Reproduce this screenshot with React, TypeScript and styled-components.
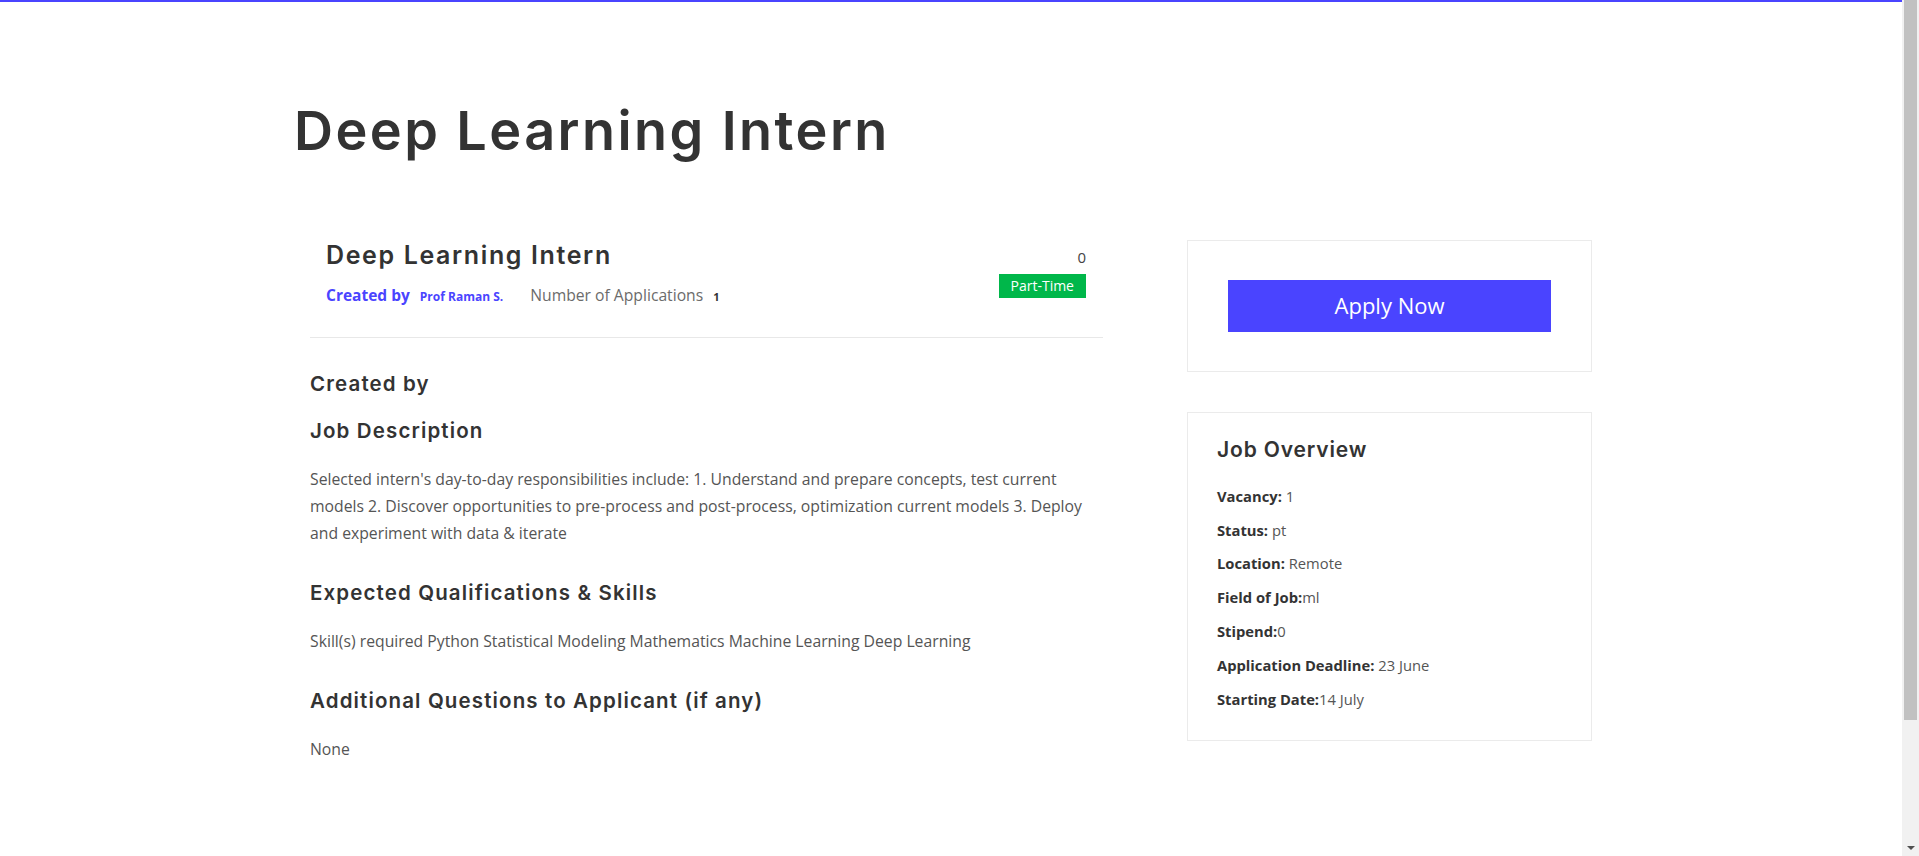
import React from "react";
import styled, { createGlobalStyle } from "styled-components";

const BLUE = "#4a44ff";
const HEAD_FONT = `"Inter", "Noto Sans", sans-serif`;
const BODY_FONT = `"Open Sans", "Noto Sans", sans-serif`;

const GlobalStyle = createGlobalStyle`
  html, body { margin: 0; padding: 0; background: #ffffff; }
  body { font-family: ${BODY_FONT}; color: #555555; }
  *, *::before, *::after { box-sizing: border-box; }
`;

const Page = styled.div`
  min-height: 1000px;
  padding-right: 17px;
`;

const TopBar = styled.div`
  height: 2px;
  background: ${BLUE};
`;

const ScrollTrack = styled.div`
  position: fixed;
  top: 0;
  right: 0;
  bottom: 0;
  width: 17px;
  background: #f1f1f1;
  display: flex;
  flex-direction: column;
  justify-content: space-between;
  align-items: center;
`;

const ScrollThumb = styled.div`
  width: 13px;
  height: 720px;
  background: #c1c1c1;
`;

const ScrollArrow = styled.div`
  width: 0;
  height: 0;
  margin-bottom: 6px;
  border-left: 4px solid transparent;
  border-right: 4px solid transparent;
  border-top: 4px solid #505050;
`;

const Container = styled.main`
  width: 1314px;
  margin: 0 auto;
`;

const PageTitle = styled.h1`
  margin: 97px 0 0;
  font-family: ${HEAD_FONT};
  font-size: 54px;
  font-weight: 600;
  line-height: 1.2;
  letter-spacing: 0.045em;
  color: #333333;
`;

const Columns = styled.div`
  margin-top: 76px;
  padding: 0 16px;
  display: grid;
  grid-template-columns: 793px 405px;
  column-gap: 84px;
  align-items: start;
`;

const MainColumn = styled.section``;

const CardHeader = styled.header`
  display: flex;
  justify-content: space-between;
  align-items: flex-start;
  padding: 1px 17px 28px 16px;
  border-bottom: 1px solid #e8e8e8;
`;

const HeaderInfo = styled.div``;

const HeaderTitle = styled.h2`
  margin: 0;
  font-family: ${HEAD_FONT};
  font-size: 25px;
  font-weight: 600;
  line-height: 1.16;
  letter-spacing: 0.065em;
  color: #333333;
`;

const MetaRow = styled.div`
  margin-top: 13px;
  display: flex;
  align-items: baseline;
  line-height: 24px;
`;

const CreatedLabel = styled.span`
  font-size: 15.5px;
  font-weight: 700;
  color: ${BLUE};
`;

const Author = styled.span`
  margin-left: 10px;
  font-size: 12px;
  font-weight: 700;
  color: ${BLUE};
`;

const AppsLabel = styled.span`
  margin-left: 27px;
  font-size: 15.7px;
  color: #6b6b6b;
`;

const AppsCount = styled.span`
  margin-left: 10px;
  font-size: 11px;
  font-weight: 700;
  color: #333333;
`;

const HeaderSide = styled.div`
  display: flex;
  flex-direction: column;
  align-items: flex-end;
  padding-top: 5px;
`;

const Count = styled.span`
  font-size: 15px;
  line-height: 22.5px;
  color: #444444;
  margin-bottom: 6px;
`;

const Badge = styled.span`
  display: inline-block;
  background: #00b74a;
  color: #ffffff;
  font-size: 14px;
  line-height: 24px;
  padding: 0 12px;
`;

const Details = styled.div`
  padding-top: 34px;
`;

const SectionTitle = styled.h3`
  margin: 0 0 23px;
  font-family: ${HEAD_FONT};
  font-size: 20.5px;
  font-weight: 600;
  line-height: 24px;
  letter-spacing: 0.055em;
  color: #333333;
`;

const Text = styled.p`
  margin: 0 0 34px;
  font-size: 15.75px;
  line-height: 27px;
  color: #555555;
`;

const SideColumn = styled.aside`
  display: flex;
  flex-direction: column;
  gap: 40px;
`;

const Card = styled.div<{ $pad: string }>`
  border: 1px solid #ebebeb;
  padding: ${(p) => p.$pad};
`;

const ApplyButton = styled.button`
  display: block;
  width: 100%;
  height: 52px;
  border: 0;
  background: ${BLUE};
  color: #ffffff;
  font-family: ${BODY_FONT};
  font-size: 22px;
  font-weight: 400;
  line-height: 48px;
  padding: 0 0 2px;
  cursor: pointer;
`;

const OverviewTitle = styled.h4`
  margin: 0 0 22px;
  font-family: ${HEAD_FONT};
  font-size: 21px;
  font-weight: 600;
  line-height: 24px;
  letter-spacing: 0.04em;
  color: #333333;
`;

const OverviewRow = styled.p`
  margin: 0 0 9.85px;
  font-size: 14.75px;
  line-height: 24px;
  color: #555555;
`;

const Label = styled.strong`
  font-weight: 700;
  color: #333333;
`;

const overview: [string, string][] = [
  ["Vacancy:", " 1"],
  ["Status:", " pt"],
  ["Location:", " Remote"],
  ["Field of Job:", "ml"],
  ["Stipend:", "0"],
  ["Application Deadline:", " 23 June"],
  ["Starting Date:", "14 July"],
];

export default function App() {
  return (
    <Page>
      <GlobalStyle />
      <TopBar />
      <Container>
        <PageTitle>Deep Learning Intern</PageTitle>
        <Columns>
          <MainColumn>
            <CardHeader>
              <HeaderInfo>
                <HeaderTitle>Deep Learning Intern</HeaderTitle>
                <MetaRow>
                  <CreatedLabel>Created by</CreatedLabel>
                  <Author>Prof Raman S.</Author>
                  <AppsLabel>Number of Applications</AppsLabel>
                  <AppsCount>1</AppsCount>
                </MetaRow>
              </HeaderInfo>
              <HeaderSide>
                <Count>0</Count>
                <Badge>Part-Time</Badge>
              </HeaderSide>
            </CardHeader>
            <Details>
              <SectionTitle>Created by</SectionTitle>
              <SectionTitle>Job Description</SectionTitle>
              <Text>
                Selected intern's day-to-day responsibilities include: 1. Understand and prepare
                concepts, test current models 2. Discover opportunities to pre-process and
                post-process, optimization current models 3. Deploy and experiment with data &amp;
                iterate
              </Text>
              <SectionTitle>Expected Qualifications &amp; Skills</SectionTitle>
              <Text>
                Skill(s) required Python Statistical Modeling Mathematics Machine Learning Deep
                Learning
              </Text>
              <SectionTitle>Additional Questions to Applicant (if any)</SectionTitle>
              <Text>None</Text>
            </Details>
          </MainColumn>
          <SideColumn>
            <Card $pad="39px 40px">
              <ApplyButton type="button">Apply Now</ApplyButton>
            </Card>
            <Card $pad="25px 29px 19px">
              <OverviewTitle>Job Overview</OverviewTitle>
              {overview.map(([label, value]) => (
                <OverviewRow key={label}>
                  <Label>{label}</Label>
                  {value}
                </OverviewRow>
              ))}
            </Card>
          </SideColumn>
        </Columns>
      </Container>
      <ScrollTrack aria-hidden="true">
        <ScrollThumb />
        <ScrollArrow />
      </ScrollTrack>
    </Page>
  );
}
